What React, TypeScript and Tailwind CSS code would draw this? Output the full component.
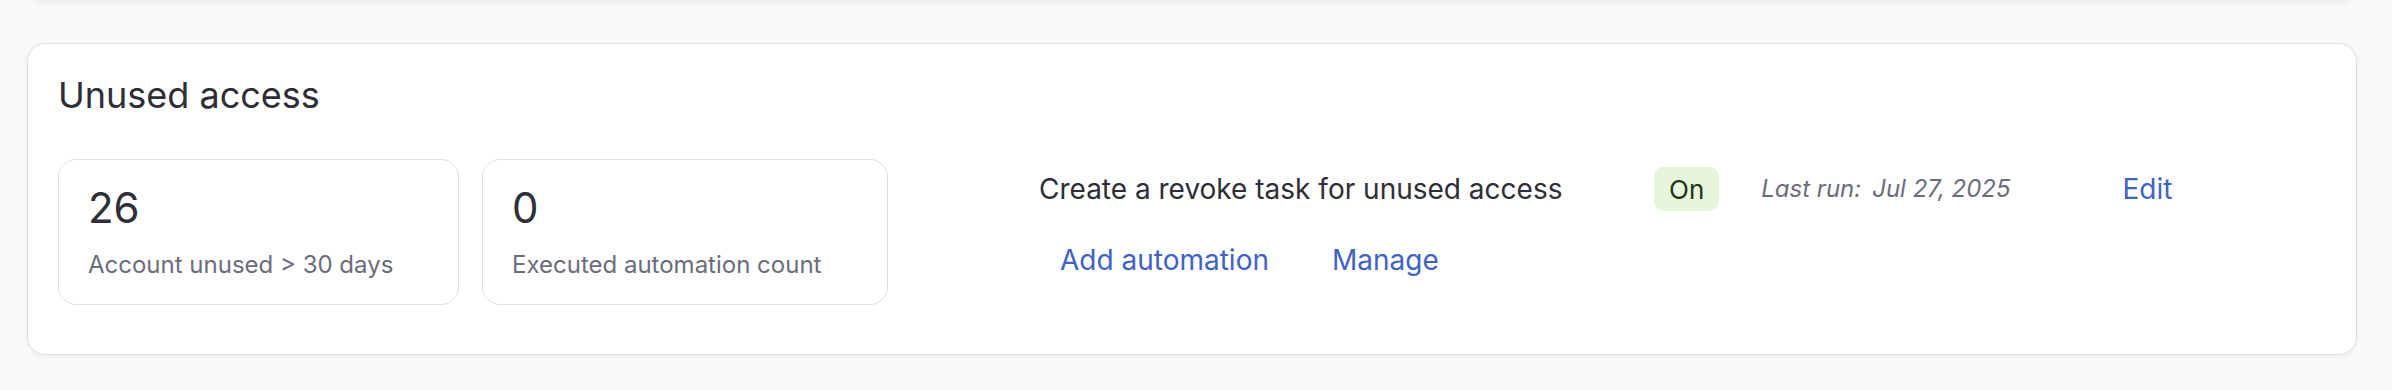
import React from "react";

function Stat({ value, label, width }: { value: string; label: string; width: string }) {
  return (
    <div className={`${width} h-[146px] rounded-[18px] border border-[#dedee2] bg-white px-[29px] pt-[24px] flex flex-col`}>
      <div className="text-[42px] leading-[48px] text-[#2f2f3a]">{value}</div>
      <div className="mt-[18px] text-[24px] leading-[30px] text-[#6c6c7c]">{label}</div>
    </div>
  );
}

export default function App() {
  return (
    <div
      className="min-h-[390px] w-full bg-[#f9fafc] overflow-hidden"
      style={{ fontFamily: "Inter, 'Noto Sans', sans-serif" }}
    >
      <div className="ml-[27px] mr-[35px] h-[30px] -mt-[30px] rounded-[18px] bg-white shadow-[0_2px_8px_rgba(0,0,0,0.07)]" />
      <div className="ml-[27px] mr-[35px] mt-[43px] h-[312px] rounded-[18px] border border-[#dfdfe3] bg-white px-[30px] pt-[29px] shadow-[0_2px_6px_rgba(0,0,0,0.06)]">
        <h2 className="text-[36px] leading-[44px] text-[#2e2e38] font-normal">Unused access</h2>
        <div className="mt-[42px] flex items-start">
          <div className="flex gap-[23px]">
            <Stat value="26" label="Account unused > 30 days" width="w-[401px]" />
            <Stat value="0" label="Executed automation count" width="w-[406px]" />
          </div>
          <div className="ml-[151px] flex flex-col">
            <div className="h-[60px] flex items-center">
              <span className="w-[615px] text-[28px] text-[#2e2e38]">Create a revoke task for unused access</span>
              <span className="h-[44px] px-[15px] flex items-center rounded-[9px] bg-[#e6f5dc] text-[26px] text-[#1b3613]">On</span>
              <span className="ml-[42px] text-[24px] italic text-[#6c6c7e] whitespace-nowrap">
                Last run:<span className="ml-[11px]">Jul 27, 2025</span>
              </span>
              <button className="ml-[91px] px-[21px] h-[44px] text-[28px] text-[#3f62c6]">Edit</button>
            </div>
            <div className="mt-[19px] h-[44px] flex items-center gap-[21px]">
              <button className="px-[21px] h-[44px] text-[28px] text-[#3f62c6]">Add automation</button>
              <button className="px-[21px] h-[44px] text-[28px] text-[#3f62c6]">Manage</button>
            </div>
          </div>
        </div>
      </div>
    </div>
  );
}
